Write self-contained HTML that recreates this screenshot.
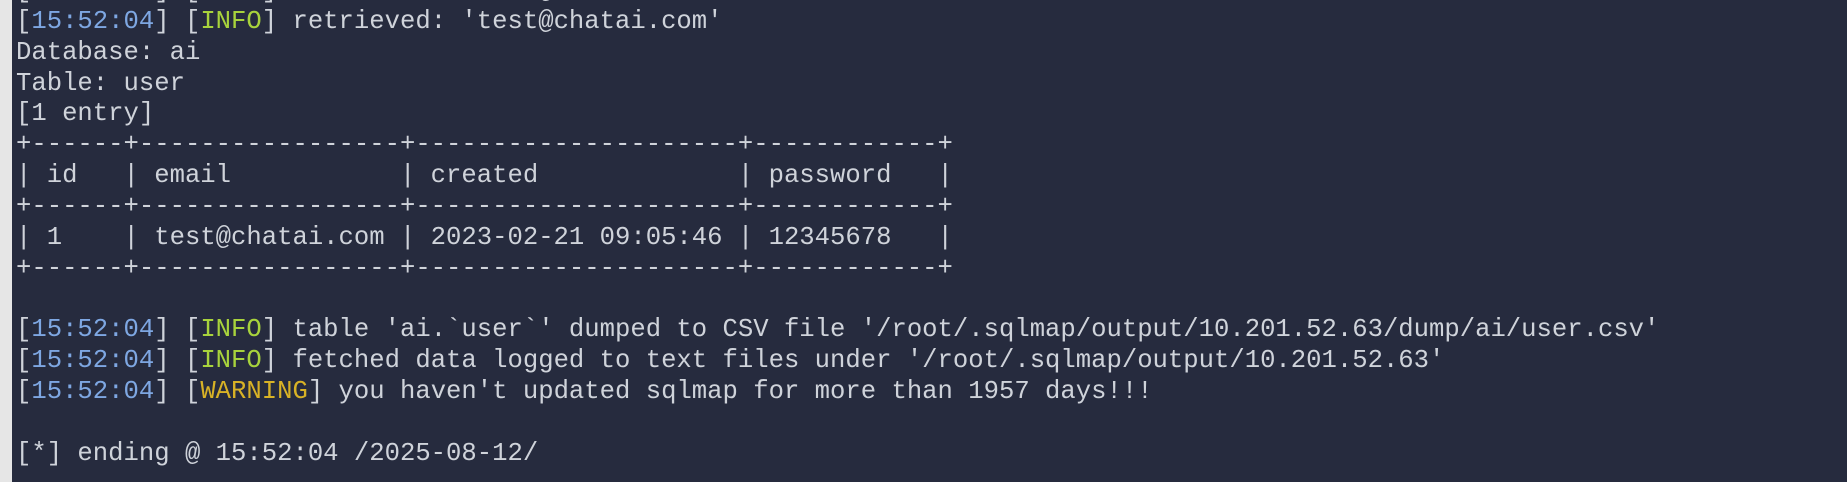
<!DOCTYPE html>
<html><head><meta charset="utf-8"><style>
html,body{margin:0;padding:0;width:1847px;height:482px;overflow:hidden;background:#262b3e;}
.bar{position:absolute;left:0;top:0;width:12px;height:482px;background:#e6e6e6;}
pre{position:absolute;left:16px;top:-24px;margin:0;font-family:"Liberation Mono",monospace;font-size:25.6px;line-height:30.85px;color:#cfd3da;white-space:pre;}
.b{color:#7ea7e2}.g{color:#a8d33c}.y{color:#d8b226}
</style></head><body><div class="bar"></div>
<pre>[<span class="b">15:52:04</span>] [<span class="g">INFO</span>] retrieved: 'test@chatai.com'
[<span class="b">15:52:04</span>] [<span class="g">INFO</span>] retrieved: 'test@chatai.com'
Database: ai
Table: user
[1 entry]
+------+-----------------+---------------------+------------+
| id   | email           | created             | password   |
+------+-----------------+---------------------+------------+
| 1    | test@chatai.com | 2023-02-21 09:05:46 | 12345678   |
+------+-----------------+---------------------+------------+

[<span class="b">15:52:04</span>] [<span class="g">INFO</span>] table 'ai.`user`' dumped to CSV file '/root/.sqlmap/output/10.201.52.63/dump/ai/user.csv'
[<span class="b">15:52:04</span>] [<span class="g">INFO</span>] fetched data logged to text files under '/root/.sqlmap/output/10.201.52.63'
[<span class="b">15:52:04</span>] [<span class="y">WARNING</span>] you haven't updated sqlmap for more than 1957 days!!!

[*] ending @ 15:52:04 /2025-08-12/
</pre></body></html>
